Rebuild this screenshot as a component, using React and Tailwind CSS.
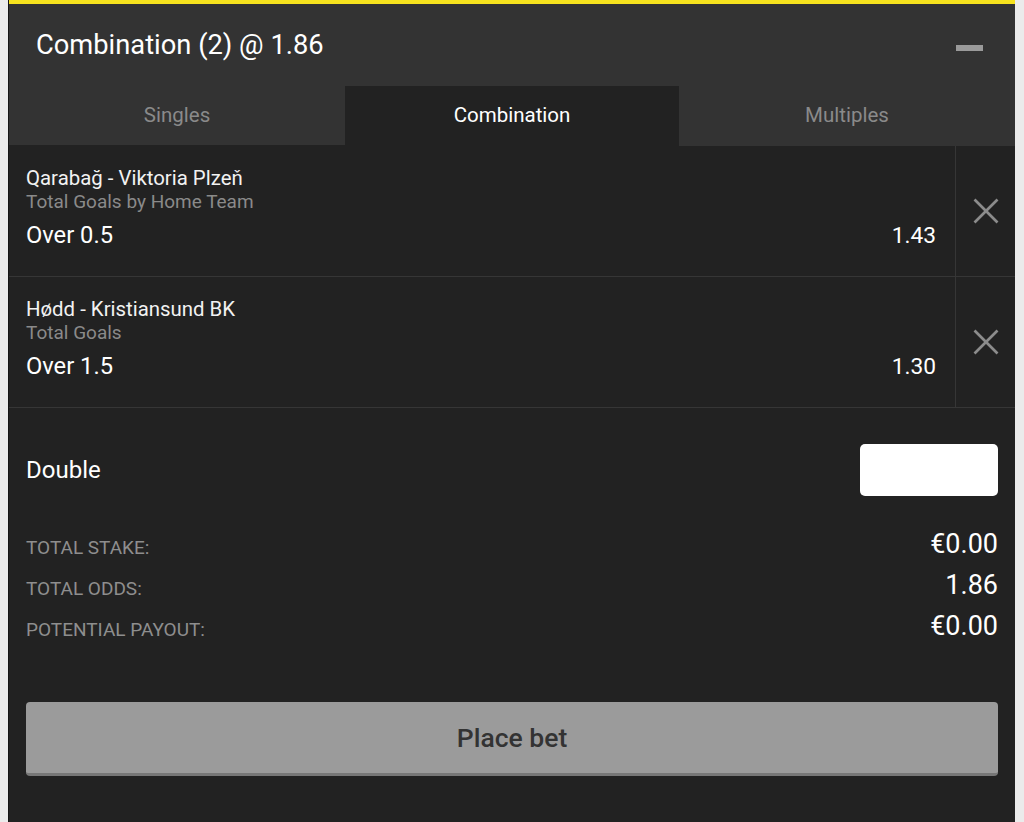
import React from "react";

function CloseIcon() {
  return (
    <svg width="26" height="26" viewBox="0 0 26 26" className="block">
      <line x1="1.5" y1="1.5" x2="24.5" y2="24.5" stroke="#8c8c8c" strokeWidth="2.6" />
      <line x1="24.5" y1="1.5" x2="1.5" y2="24.5" stroke="#8c8c8c" strokeWidth="2.6" />
    </svg>
  );
}

function Selection({ match, market, pick, odds }) {
  return (
    <div className="flex h-[131px] border-b border-[#363636]">
      <div className="flex-1 flex flex-col pl-[17px] pr-[19px] pt-[20px]">
        <div className="text-[20.4px] leading-[24px] text-[#f2f2f2]">{match}</div>
        <div className="text-[19px] leading-[24px] text-[#8a8a8a]">{market}</div>
        <div className="flex items-center justify-between mt-[8px] h-[28px]">
          <span className="text-[23.7px] text-white">{pick}</span>
          <span className="text-[22.7px] text-white">{odds}</span>
        </div>
      </div>
      <div className="w-[60px] border-l border-[#363636] flex items-center justify-center">
        <CloseIcon />
      </div>
    </div>
  );
}

function TotalRow({ label, value }) {
  return (
    <div className="flex items-baseline justify-between h-[41px]">
      <span className="text-[19px] text-[#8e8e8e] translate-y-[1px]">{label}</span>
      <span className="text-[27px] text-white">{value}</span>
    </div>
  );
}

export default function App() {
  return (
    <div
      className="w-[1024px] h-[822px] bg-[#ebebeb] overflow-hidden"
      style={{ fontFamily: "Roboto, 'Noto Sans', sans-serif" }}
    >
      <div className="ml-[8px] w-[1007px] h-full bg-[#222222] border-l border-[#161616] flex flex-col">
        <div className="h-[4px] bg-[#f7e31e]" />
        <div className="h-[82px] bg-[#333333] flex items-center justify-between pl-[27px] pr-[32px]">
          <span className="text-[27.3px] text-white -translate-y-[0.5px]">Combination (2) @ 1.86</span>
          <span className="block w-[27px] h-[6px] bg-[#9a9a9a] mt-[6px]" />
        </div>
        <div className="grid grid-cols-[336px_334px_1fr] h-[60px] text-[20.5px]">
          <div className="bg-[#333333] flex items-center justify-center text-[#8a8a8a] -translate-y-[1px]">Singles</div>
          <div className="bg-[#222222] flex items-center justify-center text-white"><span className="-translate-y-[1px]">Combination</span></div>
          <div className="bg-[#333333] flex items-center justify-center text-[#8a8a8a]"><span className="-translate-y-[1px]">Multiples</span></div>
        </div>
        <Selection match="Qarabağ - Viktoria Plzeň" market="Total Goals by Home Team" pick="Over 0.5" odds="1.43" />
        <Selection match="Hødd - Kristiansund BK" market="Total Goals" pick="Over 1.5" odds="1.30" />
        <div className="px-[17px] pt-[36px]">
          <div className="flex items-center justify-between h-[52px]">
            <span className="text-[24px] text-white">Double</span>
            <div className="w-[138px] h-[52px] bg-white rounded-[5px]" />
          </div>
          <div className="mt-[28px]">
            <TotalRow label="TOTAL STAKE:" value="€0.00" />
            <TotalRow label="TOTAL ODDS:" value="1.86" />
            <TotalRow label="POTENTIAL PAYOUT:" value="€0.00" />
          </div>
          <button className="mt-[55px] w-full h-[74px] bg-[#9b9b9b] border-b-[3px] border-[#777777] rounded-[4px] flex items-center justify-center text-[26.5px] font-medium text-[#333333]">
            Place bet
          </button>
        </div>
      </div>
    </div>
  );
}
